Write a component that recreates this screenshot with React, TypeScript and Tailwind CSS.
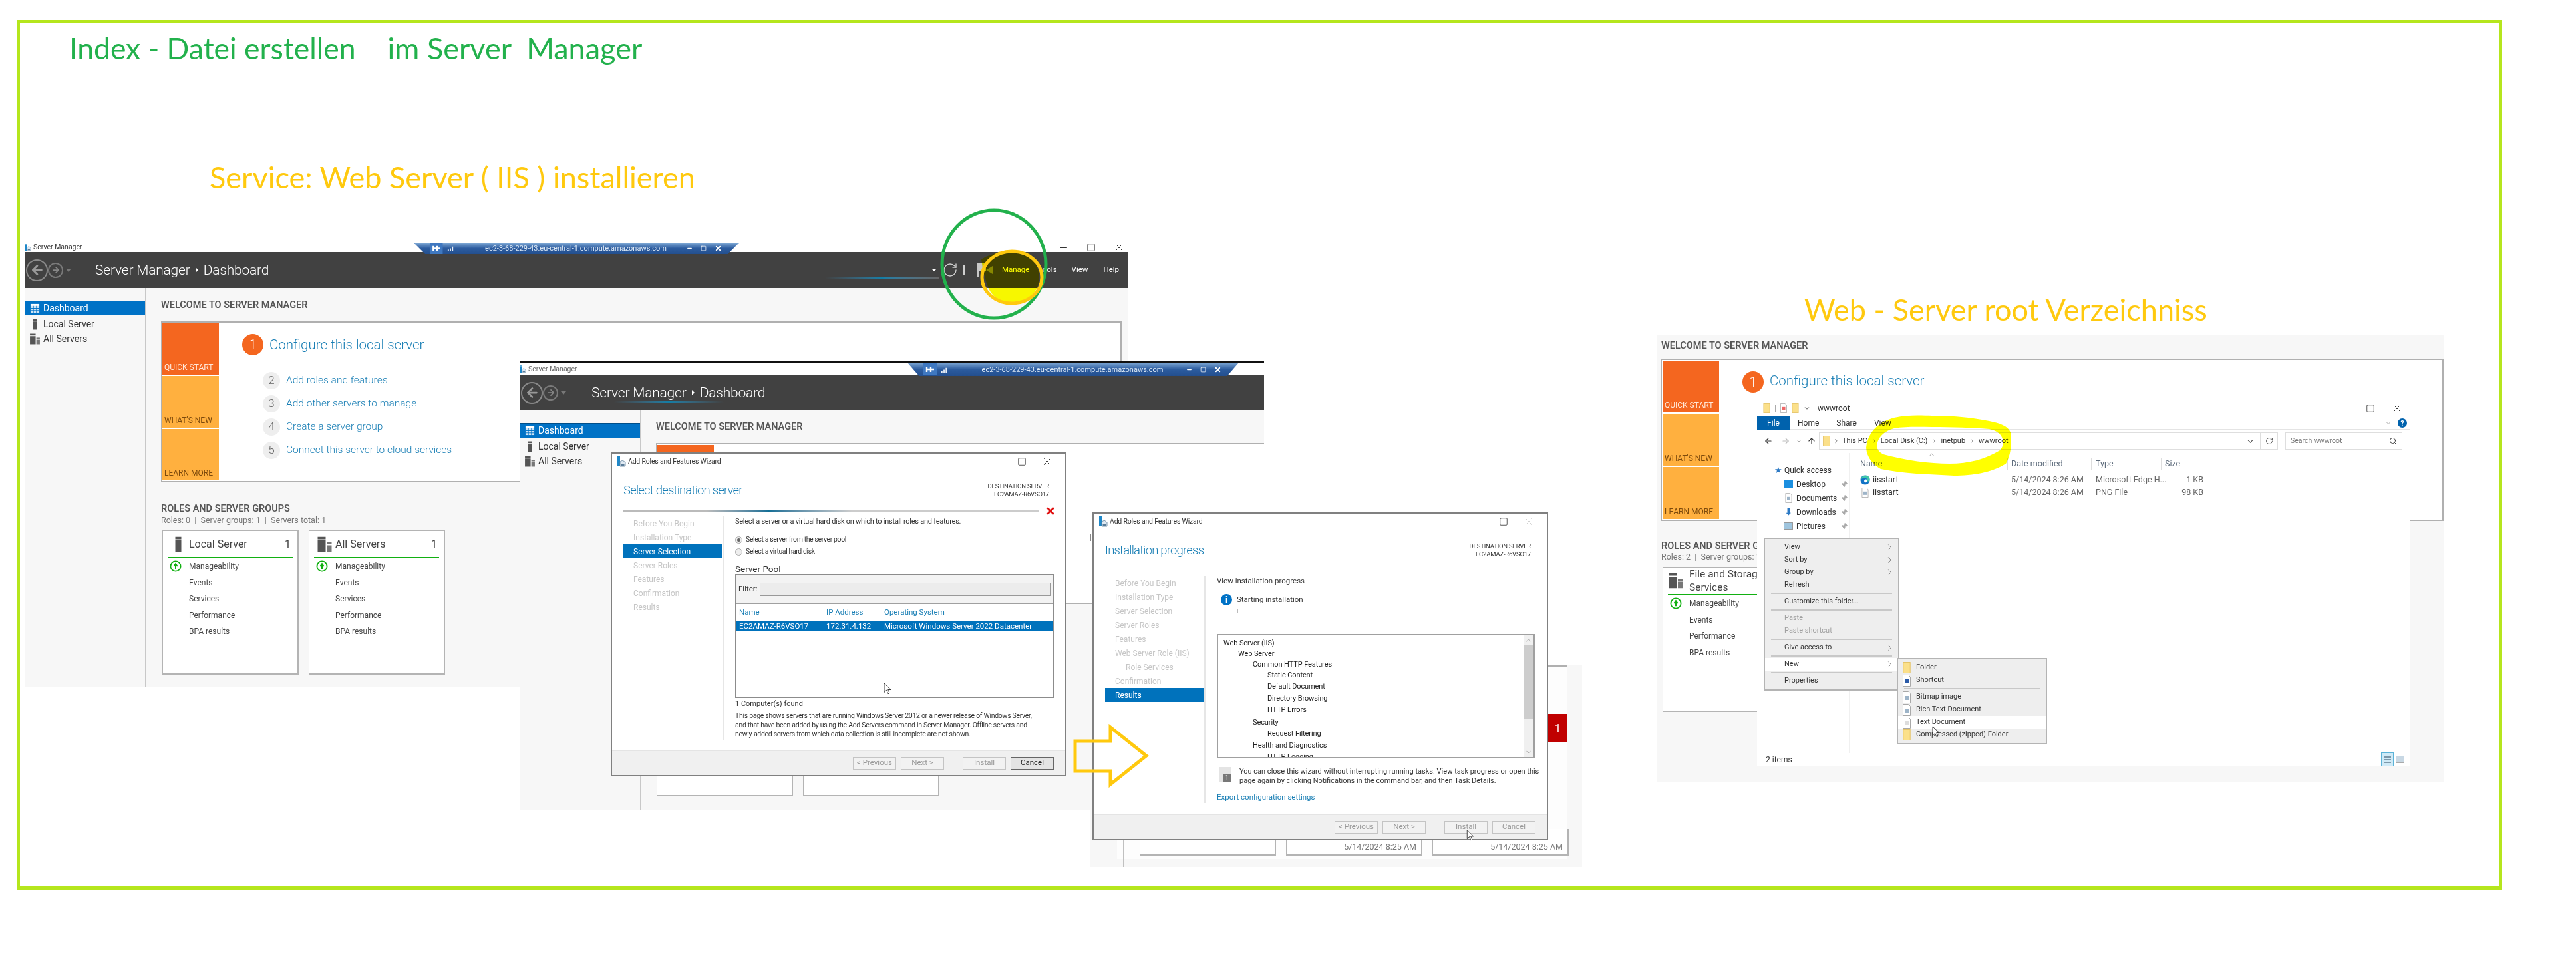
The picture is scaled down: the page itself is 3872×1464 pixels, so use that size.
import React from 'react';
import { ChevronRight, ChevronDown, ChevronUp, ArrowLeft, ArrowRight, ArrowUp, RotateCw, Search, Pin, X, Minus, Square } from 'lucide-react';

const SEGOE = "font-['Roboto','Liberation_Sans',sans-serif]";
const CALIBRI = "font-['Lato','Liberation_Sans',sans-serif]";

const WIZARD_ITEMS_1 = ['Before You Begin', 'Installation Type', 'Server Selection', 'Server Roles', 'Features', 'Confirmation', 'Results'];
const WIZARD_ITEMS_2 = ['Before You Begin', 'Installation Type', 'Server Selection', 'Server Roles', 'Features', 'Web Server Role (IIS)', 'Role Services', 'Confirmation', 'Results'];
const STEPS = ['Add roles and features', 'Add other servers to manage', 'Create a server group', 'Connect this server to cloud services'];
const CARD_ROWS = ['Manageability', 'Events', 'Services', 'Performance', 'BPA results'];

const ServerIcon: React.FC<{ className?: string }> = ({ className = 'h-[17px] w-[17px]' }) => (
  <svg viewBox="0 0 16 16" className={className}>
    <rect x="5" y="0.5" width="6" height="2.5" fill="#555" />
    <rect x="5" y="4" width="6" height="11.5" fill="#555" />
  </svg>
);

const ServersIcon: React.FC<{ className?: string }> = ({ className = 'h-[17px] w-[17px]' }) => (
  <svg viewBox="0 0 16 16" className={className}>
    <rect x="1" y="0.5" width="8" height="2.5" fill="#555" />
    <rect x="1" y="4" width="8" height="11.5" fill="#555" />
    <rect x="10" y="6" width="5" height="2" fill="#777" />
    <rect x="10" y="9" width="5" height="6.5" fill="#777" />
  </svg>
);

const GridIcon = () => (
  <svg viewBox="0 0 16 16" className="h-[15px] w-[15px]">
    <rect x="1" y="1" width="14" height="14" fill="#cfe4f5" />
    <path d="M1 1h14v3H1z" fill="#fff" />
    <path d="M1 8h14M1 11.5h14M5.5 4v11M10.5 4v11" stroke="#0072c6" strokeWidth="1" />
  </svg>
);

const WizardIcon: React.FC<{ className?: string }> = ({ className = 'h-[16px] w-[14px]' }) => (
  <svg viewBox="0 0 14 16" className={className}>
    <rect x="1" y="0" width="4" height="2" fill="#1e88c9" />
    <rect x="1" y="3" width="4" height="12" fill="#1e88c9" />
    <path d="M5 8l4-2 4 3v6H5z" fill="#dfe9f2" stroke="#5a7c98" strokeWidth="0.8" />
    <rect x="6.5" y="11" width="5" height="3" fill="#5a7c98" />
  </svg>
);

const HealthIcon = () => (
  <svg viewBox="0 0 18 18" className="h-[18px] w-[18px]">
    <circle cx="9" cy="9" r="7.6" fill="none" stroke="#12b012" strokeWidth="1.8" />
    <path d="M9 13.2V6.2M6.2 9L9 5.2 11.8 9" fill="none" stroke="#12b012" strokeWidth="2" />
  </svg>
);

const FolderIcon: React.FC<{ className?: string }> = ({ className = 'h-[18px] w-[12px]' }) => (
  <svg viewBox="0 0 12 18" className={className}>
    <rect x="0.5" y="0.5" width="11" height="17" fill="#fbe08a" stroke="#e4c264" />
  </svg>
);

const FileIcon: React.FC<{ accent?: string; className?: string }> = ({ accent = '#9db4c8', className = 'h-[18px] w-[12px]' }) => (
  <svg viewBox="0 0 12 18" className={className}>
    <path d="M0.5 0.5h8l3 3v14H.5z" fill="#fff" stroke="#a9a9a9" />
    <rect x="3" y="7" width="6" height="6" fill={accent} />
  </svg>
);

const EdgeIcon = () => (
  <svg viewBox="0 0 16 16" className="h-[15px] w-[15px]">
    <circle cx="8" cy="8" r="7.500" fill="#1173c6" />
    <path d="M1 7C2 2 7 .5 10 .8c3 .4 5.500 3 5.500 6.700 0 2-2 3-4 2.700C13 8 11 5 8 5 4.500 5 2 5.500 1 7z" fill="#3fc6a8" />
    <circle cx="9" cy="9.500" r="2.600" fill="#fff" />
  </svg>
);

const CursorIcon: React.FC<{ className: string }> = ({ className }) => (
  <svg viewBox="0 0 12 20" className={className}>
    <path d="M1 1v15l4-3.500 2.600 6 2.400-1-2.600-5.800H12z" fill="#fff" stroke="#222" strokeWidth="1" />
  </svg>
);

const HeaderNav: React.FC<{ width: string }> = ({ width }) => (
  <div className={`flex shrink-0 items-center pl-[2px] ${width}`}>
    <span className="flex h-[33px] w-[33px] items-center justify-center rounded-full border-2 border-[#8a8a8a]">
      <ArrowLeft size={22} strokeWidth={3} className="text-[#999]" />
    </span>
    <span className="flex h-[23px] w-[23px] items-center justify-center rounded-full border-2 border-[#7a7a7a]">
      <ArrowRight size={14} strokeWidth={3} className="text-[#888]" />
    </span>
    <span className="ml-[4px] h-0 w-0 border-x-[4px] border-t-[5px] border-x-transparent border-t-[#777]" />
  </div>
);

const Breadcrumb = () => (
  <div className="flex items-center text-[21px] leading-none font-light tracking-[-0.2px] text-white">
    <span>Server Manager</span>
    <span className="mx-[8px] h-0 w-0 border-y-[4px] border-l-[4px] border-y-transparent border-l-white" />
    <span>Dashboard</span>
  </div>
);

const Sidebar = () => (
  <aside className="flex w-[182px] shrink-0 flex-col border-r border-[#c8c8c8] pt-[19px] text-[14px] text-[#333]">
    <div className="flex h-[22px] items-center gap-[5px] border-t border-[#004f8a] bg-[#0072c6] pl-[8px] text-white">
      <GridIcon />
      Dashboard
    </div>
    <div className="mt-[2px] flex h-[22px] items-center gap-[4px] pl-[7px]">
      <ServerIcon />
      Local Server
    </div>
    <div className="flex h-[22px] items-center gap-[4px] pl-[7px]">
      <ServersIcon />
      All Servers
    </div>
  </aside>
);

const Tiles = () => (
  <div className="flex w-[85px] shrink-0 flex-col gap-[2px] text-[12px] leading-none">
    <div className="flex h-[78px] items-end bg-[#f4661f] px-[3px] pb-[5px] text-[#ffe8d8]">QUICK START</div>
    <div className="flex h-[78px] items-end bg-[#ffb03f] px-[3px] pb-[5px] text-[#7d4a0c]">WHAT&apos;S NEW</div>
    <div className="flex h-[78px] items-end bg-[#ffb03f] px-[3px] pb-[5px] text-[#7d4a0c]">LEARN MORE</div>
  </div>
);

const NumberBadge: React.FC<{ n: number }> = ({ n }) => (
  <span className="flex h-[32px] w-[32px] shrink-0 items-center justify-center rounded-full bg-[#f4661f] text-[20px] font-light text-white">{n}</span>
);

const StepList = () => (
  <div className="flex flex-col pt-[16px] pl-[66px]">
    <div className="-ml-[31px] flex items-center gap-[9px]">
      <NumberBadge n={1} />
      <span className="text-[20.500px] leading-none font-light text-[#1a7fb5]">Configure this local server</span>
    </div>
    <div className="mt-[25px] flex flex-col gap-[9px]">
      {STEPS.map((step, i) => (
        <div key={step} className="flex h-[26px] items-center gap-[9px]">
          <span className="flex h-[26px] w-[26px] items-center justify-center rounded-full bg-[#eeeeee] text-[17px] font-light text-[#666]">{i + 2}</span>
          <span className="text-[15.500px] leading-none font-light text-[#1a7fb5]">{step}</span>
        </div>
      ))}
    </div>
  </div>
);

const RoleCard: React.FC<{ title: string; count: number; icon: React.ReactNode }> = ({ title, count, icon }) => (
  <div className="flex h-[217px] w-[205px] flex-col border-t border-r-2 border-b-2 border-l border-[#b4b4b4] bg-white px-[7px] text-[#444]">
    <div className="flex h-[41px] items-center border-b-2 border-[#12b012] pr-[3px]">
      <span className="flex w-[32px] justify-center">{icon}</span>
      <span className="text-[16px]">{title}</span>
      <span className="ml-auto text-[16px]">{count}</span>
    </div>
    <div className="flex flex-col">
      {CARD_ROWS.map((row, i) => (
        <div key={row} className="flex h-[24.500px] items-center text-[12px]">
          <span className="flex w-[32px] justify-start pl-[3px]">{i === 0 && <HealthIcon />}</span>
          {row}
        </div>
      ))}
    </div>
  </div>
);

const RdpBar: React.FC<{ className: string }> = ({ className }) => (
  <div className={`absolute flex items-center bg-linear-to-b from-[#7da7d4] via-[#2c5c9f] to-[#234f8f] text-[11px] text-[#dce8f5] [clip-path:polygon(0_0,100%_0,96.500%_100%,3.500%_100%)] ${className}`}>
    <svg viewBox="0 0 20 18" className="ml-[24px] h-full w-[20px]">
      <rect x="0" y="0" width="20" height="18" fill="#3f78c0" />
      <path d="M4 9h12M5 5v8M11 5v8" stroke="#fff" strokeWidth="2.400" />
    </svg>
    <svg viewBox="0 0 12 12" className="ml-[6px] h-[11px] w-[11px]"><path d="M1 11V8h2v3zM4.500 11V6h2v5zM8 11V3h2v8z" fill="#e8eef6" /></svg>
    <span className="flex-1 pl-[16px] text-center leading-none">ec2-3-68-229-43.eu-central-1.compute.amazonaws.com</span>
    <span className="mr-[26px] flex items-center gap-[12px]">
      <Minus size={9} strokeWidth={4} className="text-white" />
      <Square size={9} strokeWidth={2} className="text-white" />
      <X size={11} strokeWidth={4} className="text-white" />
    </span>
  </div>
);

const WinControls: React.FC<{ gap?: string; dim?: boolean }> = ({ gap = 'gap-[22px]', dim }) => (
  <span className={`flex items-center ${gap} text-[#222]`}>
    <Minus size={17} strokeWidth={1.3} />
    <Square size={14} strokeWidth={1.3} />
    <X size={18} strokeWidth={1.2} className={dim ? 'text-[#ccc]' : ''} />
  </span>
);

const WizardButton: React.FC<{ label: string; active?: boolean; extra?: string }> = ({ label, active, extra = '' }) => (
  <span className={`flex h-[19px] w-[65px] items-center justify-center border text-[11.500px] ${active ? 'border-[#666] bg-[#e4e4e4] text-[#222]' : 'border-[#c4c4c4] bg-[#f2f2f2] text-[#999]'} ${extra}`}>{label}</span>
);

interface WizardProps {
  className: string;
  heading: string;
  items: string[];
  selected: number;
  headerHeight: string;
  bodyHeight: string;
  active?: boolean;
  children: React.ReactNode;
}

const Wizard: React.FC<WizardProps> = ({ className, heading, items, selected, headerHeight, bodyHeight, active, children }) => (
  <div className={`absolute flex flex-col border-2 border-[#808080] bg-white ${className}`}>
    <div className="flex h-[24px] shrink-0 items-center px-[7px] text-[10.500px] tracking-[-0.2px] text-[#333]">
      <WizardIcon />
      <span className="ml-[3px]">Add Roles and Features Wizard</span>
      <span className="mr-[11px] ml-auto"><WinControls dim={!active} /></span>
    </div>
    <div className={`flex shrink-0 items-start justify-between pt-[16px] pr-[24px] pl-[17px] ${headerHeight}`}>
      <span className="text-[18.500px] leading-[30px] font-light tracking-[-0.8px] text-[#1a7fb5]">{heading}</span>
      <span className="pt-[3px] text-right text-[9.500px] leading-[12px] tracking-[-0.2px] text-[#333]">
        DESTINATION SERVER
        <br />
        EC2AMAZ-R6VSO17
      </span>
    </div>
    <div className={`flex shrink-0 ${bodyHeight}`}>
      <nav className="w-[168px] shrink-0 border-r-2 border-[#e6e6e6] pr-[1px] pl-[17px] text-[12px] text-[#c6c6c6]">
        {items.map((item, i) => (
          <div key={item} className={`flex h-[21px] items-center ${i === selected ? 'bg-[#0072bc] text-white' : ''} ${item === 'Role Services' ? 'pl-[31px]' : 'pl-[15px]'}`}>
            {item}
          </div>
        ))}
      </nav>
      <div className="min-w-0 flex-1 pr-[16px] pl-[17px] text-[11.500px] text-[#333]">{children}</div>
    </div>
    <div className="mt-auto flex h-[37px] items-center gap-[7px] border-t border-[#e4e4e4] bg-[#f0f0f0] pr-[16px] pl-[362px]">
      <WizardButton label="< Previous" />
      <WizardButton label="Next >" extra="mr-[21px]" />
      <WizardButton label="Install" />
      <WizardButton label="Cancel" active={active} />
    </div>
  </div>
);

const TreeLine: React.FC<{ text: string; pad: string; h: string }> = ({ text, pad, h }) => (
  <div className={`flex items-center ${pad} ${h}`}>{text}</div>
);

const NavRow: React.FC<{ icon: React.ReactNode; label: string }> = ({ icon, label }) => (
  <div className="flex h-[21px] items-center">
    <span className="flex w-[18px] justify-center">{icon}</span>
    <span className="ml-[3px] w-[67px]">{label}</span>
    <Pin size={10} className="rotate-45 fill-[#aaa] text-[#aaa]" />
  </div>
);

const MenuSep = () => <div className="mx-[9px] my-[2px] h-[2px] bg-[#c8c8c8]" />;

const MenuRow: React.FC<{ label: string; arrow?: boolean; dim?: boolean; hot?: boolean; icon?: React.ReactNode }> = ({ label, arrow, dim, hot, icon }) => (
  <div className={`flex h-[19px] items-center text-[11px] ${dim ? 'text-[#a0a0a0]' : 'text-[#333]'} ${hot ? 'bg-white' : ''} ${icon ? 'pl-[7px]' : 'pl-[29px]'}`}>
    {icon && <span className="mr-[8px] flex w-[12px] justify-center">{icon}</span>}
    {label}
    {arrow && <ChevronRight size={15} strokeWidth={1} className="mr-[5px] ml-auto text-[#444]" />}
  </div>
);

const App: React.FC = () => {
  return (
    <div className={`relative h-[1464px] w-[3872px] overflow-hidden bg-white ${SEGOE}`}>
      {/* slide frame */}
      <div className="absolute top-[30px] left-[25px] h-[1307px] w-[3736px] border-[5px] border-[#b5e61d]" />

      <h1 className={`absolute top-[42px] left-[104px] flex text-[44.500px] leading-[60px] font-normal text-[#22b14c] ${CALIBRI}`}>
        <span>Index - Datei erstellen</span>
        <span className="ml-[48px] whitespace-pre text-[45px]">im Server  Manager</span>
      </h1>
      <h2 className={`absolute top-[236px] left-[315px] text-[45px] leading-[60px] font-normal text-[#ffc90e] ${CALIBRI}`}>Service: Web Server ( IIS ) installieren</h2>
      <h2 className={`absolute top-[435px] left-[2712px] text-[45px] leading-[60px] font-normal text-[#ffc90e] ${CALIBRI}`}>Web - Server root Verzeichniss</h2>

      {/* first server manager shot */}
      <section className="absolute top-[365px] left-[37px] flex h-[668px] w-[1658px] flex-col bg-[#f7f7f7]">
        <div className="flex h-[14px] shrink-0 items-center gap-[3px] bg-white text-[10.500px] text-[#333]">
          <WizardIcon className="h-[12px] w-[10px]" />
          Server Manager
          <span className="mr-[4px] ml-auto"><WinControls gap="gap-[26px]" /></span>
        </div>
        <header className="relative flex h-[54px] shrink-0 items-center bg-[#414141] text-white">
          <HeaderNav width="w-[106px]" />
          <Breadcrumb />
          <div className="absolute right-[284px] bottom-[13px] h-[3px] w-[171px] bg-linear-to-r from-[#414141] via-[#0f7ea6] to-[#666]" />
          <div className="ml-auto flex items-center pr-[13px] text-[11.500px]">
            <span className="mr-[8px] h-0 w-0 border-x-[4px] border-t-[4px] border-x-transparent border-t-white" />
            <RotateCw size={24} strokeWidth={1.4} className="mr-[8px] text-[#cfcfcf]" />
            <span className="mr-[18px] h-[16px] w-[2px] bg-[#cfcfcf]" />
            <span className="h-[20px] w-[14px] bg-[#c8c8c8] [clip-path:polygon(0_0,100%_0,100%_55%,25%_55%,25%_100%,0_100%)]" />
            <span className="mr-[14px] h-0 w-0 border-y-[6px] border-r-[10px] border-y-transparent border-r-[#888]" />
            <span className="mr-[13px]">Manage</span>
            <span className="mr-[22px]">Tools</span>
            <span className="mr-[23px]">View</span>
            <span>Help</span>
          </div>
        </header>
        <div className="flex min-h-0 flex-1">
          <Sidebar />
          <main className="min-w-0 flex-1 pl-[23px]">
            <h3 className="mt-[17px] text-[14.500px] leading-[18px] font-semibold text-[#555]">WELCOME TO SERVER MANAGER</h3>
            <div className="mt-[15px] mr-[9px] flex h-[242px] border-t-2 border-r-2 border-b-2 border-l border-[#b0b0b0] bg-white p-[1px]">
              <Tiles />
              <StepList />
            </div>
            <h3 className="mt-[32px] text-[14.500px] leading-[16px] font-semibold text-[#555]">ROLES AND SERVER GROUPS</h3>
            <p className="text-[12.500px] leading-[17px] text-[#777]">Roles: 0 &nbsp;|&nbsp; Server groups: 1 &nbsp;|&nbsp; Servers total: 1</p>
            <div className="mt-[7px] -ml-[1px] flex gap-[15px] pl-[3px]">
              <RoleCard title="Local Server" count={1} icon={<ServerIcon className="h-[24px] w-[24px]" />} />
              <RoleCard title="All Servers" count={1} icon={<ServersIcon className="h-[24px] w-[24px]" />} />
            </div>
          </main>
        </div>
      </section>

      <RdpBar className="top-[365px] left-[622px] h-[17px] w-[489px]" />

      {/* third shot that sits behind the install wizard */}
      <section className="absolute top-[1000px] left-[1639px] flex h-[303px] w-[739px] flex-col justify-end bg-[#f7f7f7]">
        <div className="absolute top-0 left-[688px] h-[2px] w-[29px] bg-[#b0b0b0]" />
        <div className="absolute top-[2px] right-[22px] bottom-[12px] left-[40px] bg-[#fdfdfd]" />
        <div className="absolute top-[73px] left-[688px] flex h-[43px] w-[29px] items-center justify-center bg-[#c00000] text-[16px] text-white">1</div>
        <div className="absolute top-[263px] bottom-0 left-[49px] w-px bg-[#c0c0c0]" />
        <div className="relative mb-[17px] ml-[74px] flex gap-[15px]">
          {['', '5/14/2024 8:25 AM', '5/14/2024 8:25 AM'].map((date, i) => (
            <div key={i} className="flex h-[40px] w-[205px] justify-end border-r-2 border-b-2 border-l border-[#b4b4b4] bg-white px-[7px] pt-[21px] text-[12.500px] leading-none text-[#777]">
              {date}
            </div>
          ))}
        </div>
      </section>

      {/* second server manager shot */}
      <section className="absolute top-[543px] left-[781px] flex h-[674px] w-[1119px] flex-col border-t-[3px] border-[#111] bg-[#f7f7f7]">
        <div className="flex h-[17px] shrink-0 items-center gap-[3px] bg-white text-[10.500px] text-[#666]">
          <WizardIcon className="h-[12px] w-[10px]" />
          Server Manager
        </div>
        <header className="relative flex h-[54px] shrink-0 items-center bg-[#414141]">
          <HeaderNav width="w-[108px]" />
          <Breadcrumb />
          <div className="absolute top-[40px] left-[142px] h-[2px] w-[165px] bg-linear-to-r from-[#414141] via-[#0f7ea6] to-[#414141]" />
        </header>
        <div className="flex min-h-0 flex-1">
          <Sidebar />
          <main className="min-w-0 flex-1 pl-[23px]">
            <h3 className="mt-[16px] text-[14.500px] leading-[18px] font-semibold text-[#555]">WELCOME TO SERVER MANAGER</h3>
            <div className="mt-[15px] flex h-[242px] border-t-2 border-b-2 border-l border-[#b0b0b0] bg-white p-[1px]">
              <Tiles />
            </div>
            <div className="mt-[46px] flex gap-[15px] pl-[1px]">
              <div className="h-[243px] w-[205px] border-r-2 border-b-2 border-l border-[#b4b4b4] bg-white" />
              <div className="h-[243px] w-[205px] border-r-2 border-b-2 border-l border-[#b4b4b4] bg-white" />
            </div>
          </main>
        </div>
      </section>

      <RdpBar className="top-[545px] left-[1364px] h-[20px] w-[498px]" />
      <div className="absolute top-[803px] left-[1639px] h-[10px] w-px bg-[#888]" />

      {/* select destination wizard */}
      <Wizard
        className="top-[680px] left-[918px] h-[487px] w-[685px]"
        heading="Select destination server"
        items={WIZARD_ITEMS_1}
        selected={2}
        headerHeight="h-[70px]"
        bodyHeight="h-[337px]"
        active
      >
        <p className="pt-[1px] text-[11px] leading-[14px] tracking-[-0.25px] whitespace-nowrap">Select a server or a virtual hard disk on which to install roles and features.</p>
        <div className="mt-[11px] flex h-[18px] items-center gap-[5px] text-[10.500px] tracking-[-0.4px]">
          <span className="flex h-[11px] w-[11px] items-center justify-center rounded-full border border-[#aaa] bg-[#eee]"><span className="h-[5px] w-[5px] rounded-full bg-[#666]" /></span>
          Select a server from the server pool
        </div>
        <div className="flex h-[18px] items-center gap-[5px] text-[10.500px] tracking-[-0.4px]">
          <span className="h-[11px] w-[11px] rounded-full border border-[#aaa] bg-[#eee]" />
          Select a virtual hard disk
        </div>
        <p className="mt-[8px] text-[13.500px] leading-[18px]">Server Pool</p>
        <div className="mt-[-1px] h-[186px] border-2 border-[#8c8c8c] bg-white">
          <div className="flex h-[43px] items-center border-b-2 border-[#a0a0a0] bg-[#f3f3f3] px-[3px]">
            <span className="w-[32px]">Filter:</span>
            <span className="h-[20px] flex-1 border border-[#999] bg-[#ececec]" />
          </div>
          <div className="flex h-[26px] items-center pl-[4px] text-[#1a7fb5]">
            <span className="w-[131px]">Name</span>
            <span className="w-[87px]">IP Address</span>
            <span>Operating System</span>
          </div>
          <div className="flex h-[15px] items-center bg-[#0072bc] pl-[4px] text-white">
            <span className="w-[131px]">EC2AMAZ-R6VSO17</span>
            <span className="w-[87px]">172.31.4.132</span>
            <span>Microsoft Windows Server 2022 Datacenter</span>
          </div>
        </div>
        <p className="mt-[1px] text-[11px] leading-[16px]">1 Computer(s) found</p>
        <p className="mt-[3px] text-[10.500px] leading-[14px] tracking-[-0.3px] whitespace-nowrap">
          This page shows servers that are running Windows Server 2012 or a newer release of Windows Server,
          <br />
          and that have been added by using the Add Servers command in Server Manager. Offline servers and
          <br />
          newly-added servers from which data collection is still incomplete are not shown.
        </p>
      </Wizard>
      <div className="absolute top-[767px] left-[937px] h-[3px] w-[624px] bg-linear-to-r from-[#bbb] from-20% via-[#0f6f96] via-35% to-[#ccc] to-55%" />
      <X size={16} strokeWidth={4} className="absolute top-[760px] left-[1571px] text-[#e01010]" />
      <CursorIcon className="absolute top-[1026px] left-[1328px] h-[18px] w-[11px]" />

      {/* install wizard */}
      <Wizard
        className="top-[770px] left-[1642px] h-[493px] w-[685px]"
        heading="Installation progress"
        items={WIZARD_ITEMS_2}
        selected={8}
        headerHeight="h-[70px]"
        bodyHeight="h-[341px]"
      >
        <p className="leading-[14px]">View installation progress</p>
        <div className="mt-[13px] ml-[6px] flex items-center gap-[7px]">
          <span className="flex h-[17px] w-[17px] items-center justify-center rounded-full bg-[#0072c6] text-[12px] leading-none font-bold text-white">i</span>
          Starting installation
        </div>
        <div className="mt-[5px] ml-[31px] h-[7px] w-[341px] border border-[#bbb] bg-white" />
        <div className="relative mt-[31px] mr-[2px] h-[187px] overflow-hidden border-2 border-[#a0a0a0] bg-white text-[11px] tracking-[-0.1px] text-[#222]">
          <TreeLine text="Web Server (IIS)" pad="pl-[8px]" h="h-[16px] mt-[4px]" />
          <TreeLine text="Web Server" pad="pl-[30px]" h="h-[16px]" />
          <TreeLine text="Common HTTP Features" pad="pl-[52px]" h="h-[16px]" />
          <TreeLine text="Static Content" pad="pl-[74px]" h="h-[16px]" />
          <TreeLine text="Default Document" pad="pl-[74px]" h="h-[18px]" />
          <TreeLine text="Directory Browsing" pad="pl-[74px]" h="h-[17px]" />
          <TreeLine text="HTTP Errors" pad="pl-[74px]" h="h-[18px]" />
          <TreeLine text="Security" pad="pl-[52px]" h="h-[19px]" />
          <TreeLine text="Request Filtering" pad="pl-[74px]" h="h-[16px]" />
          <TreeLine text="Health and Diagnostics" pad="pl-[52px]" h="h-[19px]" />
          <TreeLine text="HTTP Logging" pad="pl-[74px]" h="h-[16px]" />
          <div className="absolute top-0 right-0 bottom-0 flex w-[15px] flex-col items-center justify-between bg-[#f0f0f0]">
            <ChevronUp size={11} className="mt-[2px] text-[#999]" />
            <ChevronDown size={11} className="mb-[2px] text-[#999]" />
            <span className="absolute top-[15px] h-[110px] w-full bg-[#cdcdcd]" />
          </div>
        </div>
        <div className="mt-[13px] ml-[4px] flex gap-[13px] text-[11px] leading-[14px] whitespace-nowrap">
          <span className="flex h-[22px] w-[17px] shrink-0 items-end justify-end bg-[#e4e4e4]">
            <span className="flex h-[12px] w-[12px] items-center justify-center bg-[#777] text-[9px] leading-none text-white">1</span>
          </span>
          <p>
            You can close this wizard without interrupting running tasks. View task progress or open this
            <br />
            page again by clicking Notifications in the command bar, and then Task Details.
          </p>
        </div>
        <p className="mt-[9px] text-[#1a7fb5]">Export configuration settings</p>
      </Wizard>
      <CursorIcon className="absolute top-[1247px] left-[2204px] h-[17px] w-[11px]" />

      {/* explorer shot */}
      <section className="absolute top-[503px] left-[2491px] h-[673px] w-[1182px] bg-[#f7f7f7] pl-[6px]">
        <h3 className="mt-[4px] pt-[4px] text-[14.500px] leading-[18px] font-semibold text-[#555]">WELCOME TO SERVER MANAGER</h3>
        <div className="mt-[10px] flex h-[244px] border-t-2 border-r-2 border-b-2 border-l border-[#b0b0b0] bg-white p-[1px]">
          <Tiles />
          <div className="flex items-start pt-[16px] pl-[35px]">
            <NumberBadge n={1} />
            <span className="mt-[4px] ml-[9px] text-[20.500px] leading-none font-light text-[#1a7fb5]">Configure this local server</span>
          </div>
        </div>
        <h3 className="mt-[30px] text-[14.500px] leading-[16px] font-semibold text-[#555]">ROLES AND SERVER GROUPS</h3>
        <p className="text-[12.500px] leading-[16px] text-[#777]">Roles: 2 &nbsp;|&nbsp; Server groups: 1 &nbsp;|&nbsp;</p>
        <div className="mt-[7px] ml-[2px] flex h-[218px] w-[205px] flex-col border-t border-r-2 border-b-2 border-l border-[#b4b4b4] bg-white px-[7px] text-[#444]">
          <div className="flex h-[42px] shrink-0 items-center border-b-2 border-[#12b012]">
            <ServersIcon className="mr-[8px] h-[24px] w-[24px] shrink-0" />
            <span className="text-[15.500px] leading-[20px] whitespace-nowrap">
              File and Storage
              <br />
              Services
            </span>
          </div>
          {['Manageability', 'Events', 'Performance', 'BPA results'].map((row, i) => (
            <div key={row} className="flex h-[24.500px] items-center text-[12px]">
              <span className="flex w-[32px] pl-[3px]">{i === 0 && <HealthIcon />}</span>
              {row}
            </div>
          ))}
        </div>

        <div className="absolute top-[97px] left-[150px] flex h-[552px] w-[981px] flex-col bg-white text-[12px] text-[#333]">
          <div className="flex h-[27px] shrink-0 items-center pl-[9px]">
            <FolderIcon className="h-[15px] w-[11px]" />
            <span className="mx-[7px] h-[11px] w-px bg-[#aaa]" />
            <FileIcon accent="#e66" className="h-[15px] w-[10px]" />
            <FolderIcon className="ml-[7px] h-[15px] w-[11px]" />
            <ChevronDown size={10} className="ml-[7px]" />
            <span className="mx-[5px] h-[12px] w-px bg-[#aaa]" />
            <span className="text-[12px]">wwwroot</span>
            <span className="mr-[10px] ml-auto"><WinControls gap="gap-[24px]" /></span>
          </div>
          <div className="flex h-[20px] shrink-0 items-center border-b-2 border-[#e4e4e4]">
            <span className="flex h-[20px] w-[49px] items-center justify-center bg-[#0062ad] text-white">File</span>
            <span className="ml-[12px]">Home</span>
            <span className="ml-[26px]">Share</span>
            <span className="ml-[26px]">View</span>
            <ChevronDown size={12} className="ml-auto text-[#aaa]" />
            <span className="mr-[4px] ml-[8px] flex h-[14px] w-[14px] items-center justify-center rounded-full bg-[#0062ad] text-[10px] font-bold text-white">?</span>
          </div>
          <div className="mt-[3px] flex h-[26px] shrink-0 items-center">
            <ArrowLeft size={14} className="ml-[10px]" />
            <ArrowRight size={14} className="ml-[12px] text-[#bbb]" />
            <ChevronDown size={10} className="ml-[8px] text-[#777]" />
            <ArrowUp size={14} className="ml-[7px]" />
            <div className="ml-[4px] flex h-[26px] w-[690px] items-center border border-[#dedede] pl-[5px] text-[11px]">
              <FolderIcon className="h-[16px] w-[11px]" />
              <ChevronRight size={10} className="mx-[4px] text-[#666]" />
              <span>This PC</span>
              <ChevronRight size={10} className="mx-[5px] text-[#666]" />
              <span>Local Disk (C:)</span>
              <ChevronRight size={10} className="mx-[5px] text-[#666]" />
              <span>inetpub</span>
              <ChevronRight size={10} className="mx-[5px] text-[#666]" />
              <span>wwwroot</span>
              <ChevronDown size={13} className="mr-[8px] ml-auto text-[#444]" />
              <span className="flex h-full w-[26px] items-center justify-center border-l border-[#dedede]"><RotateCw size={12} className="text-[#666]" /></span>
            </div>
            <div className="ml-[11px] flex h-[26px] w-[176px] items-center justify-between border border-[#dedede] px-[7px] text-[10.500px] text-[#777]">
              Search wwwroot
              <Search size={12} className="text-[#444]" />
            </div>
          </div>
          <div className="flex min-h-0 flex-1">
            <nav className="mt-[5px] w-[139px] shrink-0 border-r border-[#f0f0f0] pt-[15px] text-[12px]">
              <div className="flex h-[21px] items-center pl-[26px]"><span className="mr-[3px] text-[13px] leading-none text-[#2a78c4]">★</span>Quick access</div>
              <div className="pl-[38px]">
                <NavRow icon={<span className="h-[13px] w-[14px] bg-[#1b8fe0]" />} label="Desktop" />
                <NavRow icon={<FileIcon className="h-[15px] w-[11px]" />} label="Documents" />
                <NavRow icon={<span className="text-[15px] leading-none text-[#2a78c4]">⬇</span>} label="Downloads" />
                <NavRow icon={<span className="h-[11px] w-[14px] border border-[#999] bg-[#9fc5de]" />} label="Pictures" />
              </div>
            </nav>
            <div className="relative min-w-0 flex-1 pt-[11px] text-[12.500px]">
              <ChevronUp size={11} className="absolute top-[2px] left-[118px] text-[#888]" />
              <div className="flex h-[20px] items-center text-[#5e6c7c]">
                <span className="w-[237px] pl-[16px]">Name</span>
                <span className="w-[126px] border-l border-[#ddd] pl-[5px]">Date modified</span>
                <span className="w-[105px] border-l border-[#ddd] pl-[6px]">Type</span>
                <span className="w-[70px] border-r border-l border-[#ddd] pl-[5px]">Size</span>
              </div>
              <div className="mt-[5px] flex flex-col">
                <div className="flex h-[19px] items-center whitespace-nowrap text-[#666]">
                  <span className="flex w-[237px] items-center gap-[4px] pl-[16px] text-[#333]"><EdgeIcon />iisstart</span>
                  <span className="w-[126px] pl-[6px]">5/14/2024 8:26 AM</span>
                  <span className="w-[105px] pl-[7px]">Microsoft Edge H...</span>
                  <span className="w-[64px] text-right">1 KB</span>
                </div>
                <div className="flex h-[19px] items-center whitespace-nowrap text-[#666]">
                  <span className="flex w-[237px] items-center gap-[4px] pl-[16px] text-[#333]"><FileIcon className="mx-[2px] h-[15px] w-[11px]" />iisstart</span>
                  <span className="w-[126px] pl-[6px]">5/14/2024 8:26 AM</span>
                  <span className="w-[105px] pl-[7px]">PNG File</span>
                  <span className="w-[64px] text-right">98 KB</span>
                </div>
              </div>
            </div>
          </div>
          <div className="relative flex h-[20px] shrink-0 items-center pl-[13px]">
            2 items
            <div className="absolute top-[-1px] right-[8px] flex items-center gap-[3px]">
              <span className="flex h-[21px] w-[19px] flex-col justify-center gap-[2px] border border-[#5bb3d8] bg-[#cfeaf7] px-[3px]">
                <span className="h-[2px] bg-[#7c98aa]" /><span className="h-[2px] bg-[#7c98aa]" /><span className="h-[2px] bg-[#7c98aa]" />
              </span>
              <span className="h-[11px] w-[13px] border border-[#aaa] bg-[#c8d8e4]" />
            </div>
          </div>
        </div>
      </section>

      {/* context menu */}
      <div className="absolute top-[808px] left-[2651px] w-[204px] border-2 border-[#b4b4b4] bg-[#eeeeee] py-[3px]">
        <MenuRow label="View" arrow />
        <MenuRow label="Sort by" arrow />
        <MenuRow label="Group by" arrow />
        <MenuRow label="Refresh" />
        <MenuSep />
        <MenuRow label="Customize this folder..." />
        <MenuSep />
        <MenuRow label="Paste" dim />
        <MenuRow label="Paste shortcut" dim />
        <MenuSep />
        <MenuRow label="Give access to" arrow />
        <MenuSep />
        <MenuRow label="New" arrow hot />
        <MenuSep />
        <MenuRow label="Properties" />
      </div>
      <div className="absolute top-[989px] left-[2851px] w-[226px] border-2 border-[#b4b4b4] bg-[#eeeeee] py-[3px]">
        <MenuRow label="Folder" icon={<FolderIcon className="h-[17px] w-[12px]" />} />
        <MenuRow label="Shortcut" icon={<FileIcon accent="#2a5aa8" />} />
        <MenuSep />
        <MenuRow label="Bitmap image" icon={<FileIcon />} />
        <MenuRow label="Rich Text Document" icon={<FileIcon />} />
        <MenuRow label="Text Document" hot icon={<FileIcon accent="#ddd" />} />
        <MenuRow label="Compressed (zipped) Folder" icon={<FolderIcon className="h-[17px] w-[12px]" />} />
      </div>
      <CursorIcon className="absolute top-[1091px] left-[2904px] h-[18px] w-[11px]" />

      {/* arrow between the wizards */}
      <svg viewBox="0 0 115 96" className="absolute top-[1088px] left-[1613px] h-[96px] w-[115px]">
        <path d="M3 26h53V5l54 43-54 43V71H3z" fill="none" stroke="#ffc90e" strokeWidth="5" />
      </svg>

      {/* highlight on Manage */}
      <svg viewBox="0 0 100 90" className="absolute top-[374px] left-[1470px] h-[90px] w-[100px] mix-blend-multiply">
        <path d="M5 16Q20 6 45 4Q85 4 92 38Q94 70 60 82Q28 84 16 60Q8 40 5 16z" fill="#ffff00" />
      </svg>
      <svg viewBox="0 0 170 172" className="absolute top-[311px] left-[1409px] h-[172px] w-[170px]">
        <ellipse cx="85" cy="86" rx="78" ry="81" fill="none" stroke="#22b14c" strokeWidth="5" />
      </svg>
      <svg viewBox="0 0 100 90" className="absolute top-[372px] left-[1471px] h-[90px] w-[100px]">
        <ellipse cx="50" cy="45" rx="45" ry="39" fill="none" stroke="#ffc90e" strokeWidth="5" />
      </svg>

      {/* yellow scribble over the address bar */}
      <svg viewBox="0 0 230 100" className="absolute top-[620px] left-[2800px] h-[100px] w-[230px] mix-blend-multiply">
        <path fillRule="evenodd" fill="#ffff00" d="M5 53C8 28 25 14 47 8C70 3 90 5 104 5C140 5 165 8 190 13C205 16 218 20 222 30C224 50 222 65 215 77C195 90 165 95 137 95C100 93 60 92 27 85C15 78 6 68 5 53ZM21 50C22 38 32 28 47 24C65 21 85 22 104 22C135 22 165 23 190 25C200 27 208 32 210 40C212 48 210 52 206 57C185 70 160 77 130 77C100 77 65 72 31 63C25 60 21 55 21 50Z" />
      </svg>
    </div>
  );
};

export default App;
